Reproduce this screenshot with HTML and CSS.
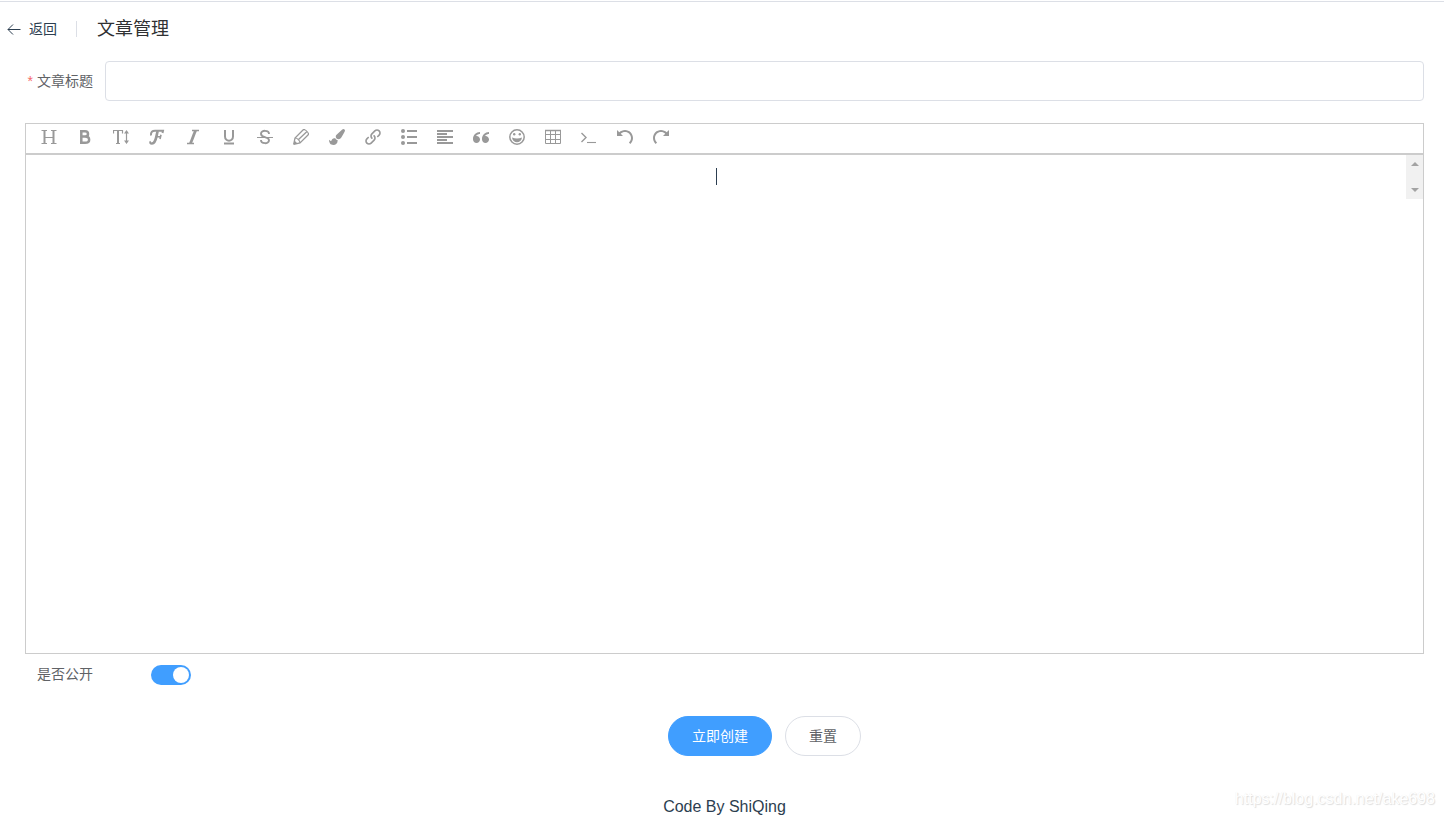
FILE: index.html
```html
<!DOCTYPE html>
<html lang="zh-CN">
<head>
<meta charset="utf-8">
<title>文章管理</title>
<link rel="stylesheet" href="styles.css">
</head>
<body>
<header class="page-header">
  <button type="button" class="back">
    <svg class="back-icon" viewBox="0 0 14 14" aria-hidden="true"><path d="M13.500 7.500H1M6 2.500L1 7.500L6 12.500"/></svg>
    <span>返回</span>
  </button>
  <h1 class="title">文章管理</h1>
</header>
<main>
<form class="article-form">
  <div class="field">
    <label class="label required" for="title">文章标题</label>
    <input class="text-input" id="title" type="text" required>
  </div>
  <section class="editor">
    <div class="toolbar" role="toolbar" aria-label="编辑工具">
      <button type="button" class="tool" aria-label="标题"><svg class="line" viewBox="0 0 16 16"><path d="M3.500 2V15M12.500 2V15" stroke-width="2"/><path d="M3 8.500H13M0.500 1.500H6M10 1.500H15.500M0.500 14.500H6M10 14.500H15.500" stroke-width="1.200"/></svg></button>
      <button type="button" class="tool" aria-label="加粗"><svg class="line" viewBox="0 0 16 16"><path d="M4.300 1V15M3 2.200H8C12 2.200 12 7.600 8 7.600H5M8 7.600C13.500 7.600 13.500 13.800 8 13.800H3" stroke-width="2.500"/></svg></button>
      <button type="button" class="tool" aria-label="字号"><svg class="line" viewBox="0 0 16 16"><path d="M5 1.500V14" stroke-width="2"/><path d="M0.500 4.500V1.500H9.500V4.500M3 14.500H7" stroke-width="1.200"/><path d="M13.500 3V13" stroke-width="1.200"/><path class="solid" d="M13.500 1L16 4.500H11ZM13.500 15L11 11.500H16Z"/></svg></button>
      <button type="button" class="tool" aria-label="字体"><svg class="line" viewBox="0 0 16 16"><path d="M8.800 2C7.300 5 7.500 14.500 3 14.500C1.500 14.500 1.300 13.500 2 12.800" stroke-width="2.700"/><path d="M2 6.500C1.500 3 3.500 1.700 6 1.700H14L13.500 4" stroke-width="2"/><path d="M7.500 7.800H11M12 5.800L11 10" stroke-width="1.600"/></svg></button>
      <button type="button" class="tool" aria-label="斜体"><svg class="line" viewBox="0 0 16 16"><path d="M10.500 1.500L5.500 14.500" stroke-width="2.800"/><path d="M7 1.500H14M2 14.500H9" stroke-width="1.400"/></svg></button>
      <button type="button" class="tool" aria-label="下划线"><svg class="line" viewBox="0 0 16 16"><path d="M4 1V7.500C4 13 12 13 12 7.500V1" stroke-width="2"/><path d="M3 14.500H13" stroke-width="2"/></svg></button>
      <button type="button" class="tool" aria-label="删除线"><svg class="line" viewBox="0 0 16 16"><path d="M12 5C12 0.800 4 0.800 4 4.800C4 7.200 6 7.700 8 8.200C10 8.700 12 9 12 11.200C12 15.200 4 15.200 4 11" stroke-width="1.900"/><path d="M0 8.500H16" stroke-width="1"/></svg></button>
      <button type="button" class="tool" aria-label="文字颜色"><svg class="line" viewBox="0 0 16 16"><path d="M0.700 15.300L2 9L10 1Q11 0 12 1M0.700 15.300L7 14L15 6Q16 5 15 4M5.500 10.500L14 2.500" stroke-width="1.300"/><path d="M2 9C4.200 8.800 7.200 11.800 7 14" stroke-width="1.200"/><path d="M12 1Q14 1.200 15 4" stroke-width="1"/><path class="solid" d="M0.500 15.500L1.500 11.500L4.500 14.500Z"/></svg></button>
      <button type="button" class="tool" aria-label="背景颜色"><svg viewBox="0 0 1792 1792"><path d="M1615 0q70 0 122.500 46.500t52.500 116.500q0 63-45 151-332 629-465 752-97 91-218 91-126 0-216.500-92.500t-90.500-219.500q0-128 92-212l638-579q59-54 130-54zm-909 1034q39 76 106.500 130t150.500 76l1 71q4 213-129.500 347t-348.500 134q-123 0-218-46.500t-152.500-127.500-86.500-183-29-220q7 5 41 30t62 44.500 59 36.500 46 17q41 0 55-37 25-66 57.500-112.500t69.500-76 88-47.500 103-25.500 125-10.500z"/></svg></button>
      <button type="button" class="tool" aria-label="链接"><svg viewBox="0 0 1024 1024"><path d="M440.236 635.766c-13.310 0-26.616-5.076-36.770-15.230-95.134-95.136-95.134-249.934 0-345.070l192-192c46.088-46.086 107.360-71.466 172.534-71.466s126.448 25.380 172.536 71.464c95.132 95.136 95.132 249.934 0 345.070l-87.766 87.766c-20.308 20.308-53.230 20.308-73.540 0-20.306-20.306-20.306-53.232 0-73.540l87.766-87.766c54.584-54.586 54.584-143.404 0-197.990-26.442-26.442-61.600-41.004-98.996-41.004s-72.552 14.562-98.996 41.006l-192 191.998c-54.586 54.586-54.586 143.406 0 197.992 20.308 20.306 20.306 53.232 0 73.540-10.150 10.152-23.462 15.230-36.768 15.230z"/><path d="M256 1012c-65.176 0-126.450-25.380-172.534-71.464-95.134-95.136-95.134-249.934 0-345.070l87.764-87.764c20.308-20.306 53.234-20.306 73.540 0 20.308 20.306 20.308 53.232 0 73.540l-87.764 87.764c-54.586 54.586-54.586 143.406 0 197.992 26.440 26.440 61.598 41.002 98.994 41.002s72.552-14.562 98.998-41.006l192-191.998c54.584-54.586 54.584-143.406 0-197.992-20.308-20.308-20.306-53.232 0-73.540 20.306-20.306 53.232-20.306 73.540 0.002 95.132 95.134 95.132 249.932 0.002 345.068l-192.002 192c-46.090 46.088-107.364 71.466-172.538 71.466z"/></svg></button>
      <button type="button" class="tool" aria-label="列表"><svg viewBox="0 0 16 16"><circle cx="2" cy="2" r="2"/><circle cx="2" cy="8" r="2"/><circle cx="2" cy="14" r="2"/><path d="M6 1H16V3H6ZM6 7H16V9H6ZM6 13H16V15H6Z"/></svg></button>
      <button type="button" class="tool" aria-label="对齐方式"><svg viewBox="0 0 16 16"><path d="M0 1H16V3H0ZM0 4H10V6H0ZM0 7H16V9H0ZM0 10H10V12H0ZM0 13H16V15H0Z"/></svg></button>
      <button type="button" class="tool" aria-label="引用"><svg viewBox="0 0 1024 1024"><path d="M225 448c123.712 0 224 100.290 224 224 0 123.712-100.288 224-224 224s-224-100.288-224-224l-1-32c0-247.424 200.576-448 448-448v128c-85.474 0-165.834 33.286-226.274 93.726-11.634 11.636-22.252 24.016-31.830 37.020 11.438-1.800 23.160-2.746 35.104-2.746zM801 448c123.710 0 224 100.290 224 224 0 123.712-100.290 224-224 224s-224-100.288-224-224l-1-32c0-247.424 200.576-448 448-448v128c-85.474 0-165.834 33.286-226.274 93.726-11.636 11.636-22.254 24.016-31.832 37.020 11.440-1.800 23.160-2.746 35.106-2.746z"/></svg></button>
      <button type="button" class="tool" aria-label="表情"><svg class="line" viewBox="0 0 16 16"><circle cx="8" cy="8" r="7.200" stroke-width="1.500"/><circle class="solid" cx="5.200" cy="5.200" r="1.200"/><circle class="solid" cx="10.800" cy="5.200" r="1.200"/><path class="solid" d="M3 8.500Q8 10.500 13 8.500C12.500 14.800 3.500 14.800 3 8.500Z"/></svg></button>
      <button type="button" class="tool" aria-label="表格"><svg class="line" viewBox="0 0 16 16"><path d="M0.500 1.500H15.500V14.500H0.500ZM0 5.500H16M0 10.500H16M5.500 1V15M10.500 1V15" stroke-width="1"/><path d="M0 1.500H16" stroke-width="1.500"/></svg></button>
      <button type="button" class="tool" aria-label="代码"><svg class="line" viewBox="0 0 16 16"><path d="M0.500 4L5 8.500L0.500 13" stroke-width="1.400"/><path d="M6 13.500H15" stroke-width="1.100"/></svg></button>
      <button type="button" class="tool" aria-label="撤销"><svg viewBox="0 0 1024 1024"><path d="M512 64c-141.384 0-269.376 57.320-362.032 149.978l-149.968-149.978v384h384l-143.532-143.522c69.496-69.492 165.492-112.478 271.532-112.478 212.068 0 384 171.924 384 384 0 114.696-50.292 217.636-130.018 288l84.666 96c106.302-93.816 173.352-231.076 173.352-384 0-282.770-229.230-512-512-512z"/></svg></button>
      <button type="button" class="tool" aria-label="重做"><svg viewBox="0 0 1024 1024"><path transform="matrix(-1 0 0 1 1024 0)" d="M512 64c-141.384 0-269.376 57.320-362.032 149.978l-149.968-149.978v384h384l-143.532-143.522c69.496-69.492 165.492-112.478 271.532-112.478 212.068 0 384 171.924 384 384 0 114.696-50.292 217.636-130.018 288l84.666 96c106.302-93.816 173.352-231.076 173.352-384 0-282.770-229.230-512-512-512z"/></svg></button>
    </div>
    <div class="content" contenteditable="true" role="textbox" aria-label="文章内容"><span class="caret"></span></div>
    <div class="scroller" aria-hidden="true"><i class="arrow up"></i><i class="arrow down"></i></div>
  </section>
  <div class="field switch-field">
    <label class="label" for="public">是否公开</label>
    <input class="switch" id="public" type="checkbox" role="switch" checked>
  </div>
  <div class="actions">
    <button type="button" class="button primary">立即创建</button>
    <button type="reset" class="button">重置</button>
  </div>
</form>
</main>
<footer class="footer">Code By ShiQing</footer>
<div class="watermark">https://blog.csdn.net/ake698</div>
</body>
</html>
```
FILE: styles.css
```css
* { box-sizing: border-box; }

body {
  position: relative;
  margin: 0;
  padding-top: 1px;
  background: #fff;
  color: #2c3e50;
  font: 14px/20px "Liberation Sans", "Noto Sans CJK SC", sans-serif;
}

button, input { font: inherit; }

.page-header {
  display: flex;
  align-items: center;
  height: 54px;
  padding-left: 7px;
  border-top: 1px solid #dcdfe6;
}

.back {
  display: flex;
  align-items: center;
  gap: 8px;
  padding: 0 19px 0 0;
  border: 0;
  background: none;
  color: #2c3e50;
  line-height: 16px;
  border-right: 1px solid #dcdfe6;
}

.back-icon {
  width: 14px;
  height: 14px;
  fill: none;
  stroke: currentColor;
}

.title {
  margin: 0 0 0 20px;
  color: #303133;
  font-size: 18px;
  font-weight: 400;
  line-height: 24px;
}

.article-form { padding: 6px 20px 0 25px; }

.field {
  display: flex;
  align-items: center;
  height: 40px;
}

.label {
  flex: 0 0 80px;
  padding-right: 12px;
  color: #606266;
  text-align: right;
}

.required::before {
  content: "*";
  margin-right: 4px;
  color: #f56c6c;
}

.text-input {
  flex: 1;
  min-width: 0;
  height: 40px;
  padding: 0 15px;
  border: 1px solid #dcdfe6;
  border-radius: 4px;
  outline: 0;
}

.editor {
  position: relative;
  margin-top: 22px;
}

.toolbar {
  display: flex;
  height: 31px;
  padding: 0 5px;
  border: 1px solid #ccc;
}

.tool {
  width: 36px;
  height: 26px;
  padding: 0;
  border: 0;
  background: none;
  color: #999;
}

.tool svg {
  display: block;
  width: 16px;
  height: 16px;
  margin: 0 auto;
  fill: currentColor;
}

.tool .line {
  fill: none;
  stroke: currentColor;
}

.tool .solid {
  fill: currentColor;
  stroke: none;
}

.content {
  height: 500px;
  padding-top: 13px;
  border: 1px solid #ccc;
  outline: 0;
}

.caret {
  display: block;
  width: 1px;
  height: 17px;
  margin: 0 auto;
  transform: translateX(-8px);
  background: #2c3e50;
}

.scroller {
  position: absolute;
  top: 32px;
  right: 1px;
  display: flex;
  flex-direction: column;
  align-items: center;
  justify-content: space-between;
  width: 17px;
  height: 44px;
  padding: 7px 0;
  background: #f1f1f1;
}

.arrow {
  border: 4px solid transparent;
}

.up {
  border-top: 0;
  border-bottom-color: #a3a3a3;
}

.down {
  border-bottom: 0;
  border-top-color: #a3a3a3;
}

.switch {
  appearance: none;
  width: 40px;
  height: 20px;
  margin: 2px 0 0 46px;
  border-radius: 10px;
  background: #dcdfe6;
}

.switch::before {
  content: "";
  display: block;
  width: 16px;
  height: 16px;
  margin: 2px;
  border-radius: 50%;
  background: #fff;
}

.switch:checked { background: #409eff; }

.switch:checked::before { margin-left: 22px; }

.actions {
  display: flex;
  justify-content: center;
  gap: 13px;
  margin-top: 22px;
  padding-left: 80px;
}

.button {
  height: 40px;
  padding: 0 23px;
  border: 1px solid #dcdfe6;
  border-radius: 20px;
  background: #fff;
  color: #606266;
}

.primary {
  border-color: #409eff;
  background: #409eff;
  color: #fff;
}

.footer {
  margin-top: 41px;
  padding-left: 5px;
  font-size: 16px;
  text-align: center;
}

.watermark {
  position: absolute;
  right: 9px;
  bottom: 8px;
  color: #fff;
  font-size: 16px;
  text-shadow: 1px 1px 1px #ddd, 0 0 1px #eee;
}
```
